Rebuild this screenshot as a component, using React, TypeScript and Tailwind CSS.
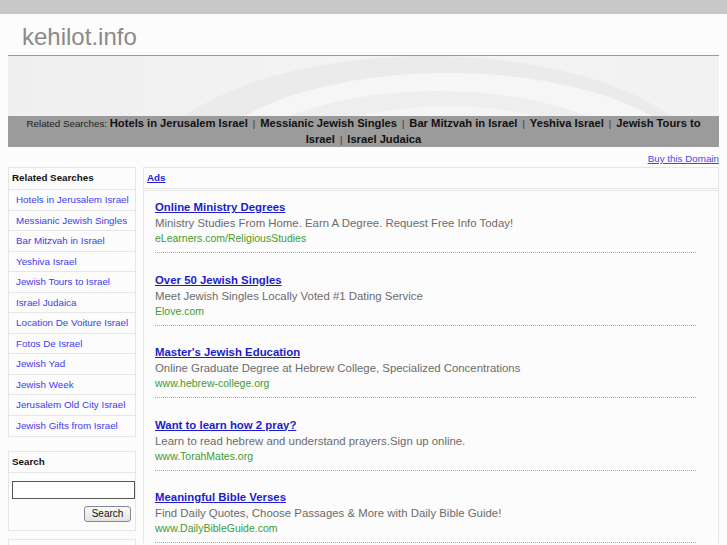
const related = [
  'Hotels in Jerusalem Israel',
  'Messianic Jewish Singles',
  'Bar Mitzvah in Israel',
  'Yeshiva Israel',
  'Jewish Tours to Israel',
  'Israel Judaica',
  'Location De Voiture Israel',
  'Fotos De Israel',
  'Jewish Yad',
  'Jewish Week',
  'Jerusalem Old City Israel',
  'Jewish Gifts from Israel',
]

const topLinks = [
  'Hotels in Jerusalem Israel',
  'Messianic Jewish Singles',
  'Bar Mitzvah in Israel',
  'Yeshiva Israel',
  'Jewish Tours to Israel',
  'Israel Judaica',
]

const ads = [
  {
    title: 'Online Ministry Degrees',
    desc: 'Ministry Studies From Home. Earn A Degree. Request Free Info Today!',
    url: 'eLearners.com/ReligiousStudies',
  },
  {
    title: 'Over 50 Jewish Singles',
    desc: 'Meet Jewish Singles Locally Voted #1 Dating Service',
    url: 'Elove.com',
  },
  {
    title: "Master's Jewish Education",
    desc: 'Online Graduate Degree at Hebrew College, Specialized Concentrations',
    url: 'www.hebrew-college.org',
  },
  {
    title: 'Want to learn how 2 pray?',
    desc: 'Learn to read hebrew and understand prayers.Sign up online.',
    url: 'www.TorahMates.org',
  },
  {
    title: 'Meaningful Bible Verses',
    desc: 'Find Daily Quotes, Choose Passages & More with Daily Bible Guide!',
    url: 'www.DailyBibleGuide.com',
  },
]

function Banner() {
  return (
    <svg className="block w-full h-[60px]" viewBox="0 0 711 60" preserveAspectRatio="none">
      <defs>
        <linearGradient id="bg" x1="0" y1="0" x2="1" y2="0">
          <stop offset="0" stopColor="#efefef" />
          <stop offset="0.5" stopColor="#f4f4f4" />
          <stop offset="1" stopColor="#f2f2f2" />
        </linearGradient>
      </defs>
      <rect width="711" height="60" fill="url(#bg)" />
      <ellipse cx="420" cy="120" rx="280" ry="120" fill="#ebebeb" />
      <ellipse cx="440" cy="125" rx="255" ry="108" fill="#f6f6f6" />
      <ellipse cx="430" cy="140" rx="230" ry="105" fill="#eeeeee" />
      <ellipse cx="440" cy="150" rx="200" ry="100" fill="#f5f5f5" />
    </svg>
  )
}

export default function App() {
  return (
    <div className="min-h-[545px] bg-[#fcfcfc] font-['Liberation_Sans',Arial,sans-serif]">
      <div className="h-[14px] bg-[#c9c8c9]" />

      {/* header */}
      <div className="mx-2">
        <div className="h-[42px] border-b border-[#9a9a9a] pl-[14px] pt-[10px]">
          <h1 className="text-[24px] leading-[26px] text-[#8a8a8a]">kehilot.info</h1>
        </div>
        <Banner />
        <div className="h-[31px] bg-[#9b9b9b] px-2 text-center text-[9px] leading-[15px]">
          <span className="text-[9.8px] leading-[15px] text-[#222]">Related Searches: </span>
          {topLinks.map((l, i) => (
            <span key={l}>
              <a href="#" className="text-[11.2px] leading-[15px] font-bold text-[#111]">{l}</a>
              {i < topLinks.length - 1 && <span className="leading-[15px] text-[#333] mx-[5px]">|</span>}
            </span>
          ))}
        </div>
        <div className="text-right h-[20px] pt-[3px] leading-[14px]">
          <a href="#" className="text-[9.8px] text-[#4646f0] underline">Buy this Domain</a>
        </div>
      </div>

      {/* columns */}
      <div className="mx-2 flex gap-[7px] items-start">
        <div className="w-[128px] shrink-0">
          <div className="border border-[#e6e6e6]">
            <div className="h-[21px] pl-[3px] pt-[3px] text-[9.8px] font-bold text-[#111]">Related Searches</div>
            {related.map(r => (
              <div key={r} className="h-[20.55px] border-t border-[#e6e6e6] pl-[7px] pt-[3px] text-[9.8px]">
                <a href="#" className="text-[#3c3cf0]">{r}</a>
              </div>
            ))}
          </div>

          <div className="mt-[14px] border border-[#e6e6e6]">
            <div className="h-[20px] pl-[3px] pt-[3px] text-[9.8px] font-bold text-[#111]">Search</div>
            <div className="border-t border-[#e6e6e6] px-[3px] pt-[8px] pb-[8px]">
              <input className="block w-[123px] h-[18px] border border-[#555] bg-white" />
              <div className="flex justify-end mt-[7px] pr-[1px]">
                <button className="h-[16px] w-[47px] rounded-[3px] border border-[#7a8a9a] bg-gradient-to-b from-[#fafafa] to-[#e4e4e4] text-[10px] leading-[14px] text-[#111]">
                  Search
                </button>
              </div>
            </div>
          </div>

          <div className="mt-[8px] h-[20px] border border-[#e6e6e6] border-b-0" />
        </div>

        <div className="flex-1">
          <div className="h-[22px] border border-[#e6e6e6] pl-[3px] pt-[3px] text-[9.8px]">
            <a href="#" className="font-bold text-[#1c1ccc] underline">Ads</a>
          </div>
          <div className="mt-[1px] border border-[#e6e6e6] border-b-0 pl-[11px] pr-[22px]">
            {ads.map(a => (
              <div key={a.title} className="pt-[17.5px] first:pt-[7px] pb-[7px] border-b border-dotted border-[#aaa]">
                <div className="leading-[16px]">
                  <a href="#" className="text-[11.4px] font-bold text-[#1c1ccc] underline">{a.title}</a>
                </div>
                <div className="text-[11.4px] leading-[16px] text-[#6b6b6b]">{a.desc}</div>
                <div className="text-[10.5px] leading-[14px] text-[#3f9b2f]">{a.url}</div>
              </div>
            ))}
          </div>
        </div>
      </div>
    </div>
  )
}
